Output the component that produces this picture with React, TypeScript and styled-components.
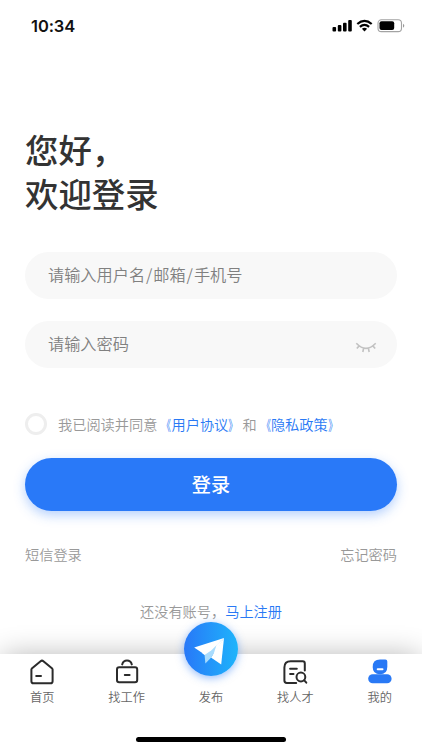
import React from 'react';
import styled, { createGlobalStyle } from 'styled-components';

const GlobalStyle = createGlobalStyle`
  * { box-sizing: border-box; }
  body { margin: 0; background: #fff; }
  button { font: inherit; border: 0; padding: 0; background: none; outline: none; }
`;

const Screen = styled.div`
  width: 100%;
  height: 750px;
  display: flex;
  flex-direction: column;
  overflow: hidden;
  background: #fff;
  font-family: 'Noto Sans CJK SC', sans-serif;
  font-weight: 350;
  color: #333;
`;

const StatusBar = styled.header`
  height: 50px;
  flex: none;
  display: flex;
  justify-content: space-between;
  align-items: center;
  padding: 2px 17px 0 31px;
`;

const Clock = styled.time`
  font: 600 16.5px/20px Inter, sans-serif;
  letter-spacing: -0.1px;
  color: #111;
`;

const Main = styled.main`
  flex: 1;
  display: flex;
  flex-direction: column;
  padding: 77px 25px 0;
`;

const Title = styled.h1`
  display: flex;
  flex-direction: column;
  margin: 0 0 38px;
  font-size: 33.4px;
  line-height: 43.5px;
  font-weight: 500;
  height: 87px;
`;

const Field = styled.div`
  display: flex;
  align-items: center;
  justify-content: space-between;
  height: 47px;
  margin-bottom: 22px;
  padding: 0 20px 0 23px;
  border-radius: 24px;
  background: #f8f8f8;
`;

const Placeholder = styled.span`
  padding-bottom: 3px;
  font-size: 16.2px;
  line-height: 24px;
  white-space: nowrap;
  color: #808080;
`;

const Slash = styled.span`
  display: inline-block;
  width: 8.2px;
  text-align: center;
`;

const Agreement = styled.div`
  display: flex;
  align-items: center;
  height: 24px;
  margin: 22px 0 21.5px;
  font-size: 14.2px;
  line-height: 20px;
  white-space: nowrap;
  color: #999;
  > span { padding-bottom: 1px; }
`;

const Radio = styled.span`
  width: 22px;
  height: 22px;
  margin-right: 11px;
  border: 3px solid #eee;
  border-radius: 50%;
`;

const Link = styled.span`
  color: #2979f5;
`;

const Bracket = styled.span<{ $side: 'left' | 'right' }>`
  display: inline-block;
  transform: scaleX(0.65);
  transform-origin: ${(p) => (p.$side === 'left' ? '95%' : '5%')} center;
`;

const Submit = styled.button`
  flex: none;
  height: 53px;
  border-radius: 27px;
  background: #2979f8;
  color: #fff;
  font-size: 19.2px;
  font-weight: 500;
  box-shadow: 0 4px 12px rgba(41, 121, 248, 0.35);
`;

const LinkRow = styled.div<{ $center?: boolean }>`
  display: flex;
  justify-content: ${(p) => (p.$center ? 'center' : 'space-between')};
  margin-top: ${(p) => (p.$center ? 33 : 31.5)}px;
  font-size: 14.2px;
  line-height: 24px;
  color: #999;
`;

const TabBar = styled.nav`
  position: relative;
  flex: none;
  height: 96px;
  display: flex;
  flex-direction: column;
  justify-content: space-between;
  background: #fff;
  box-shadow: 0 0 28px -3px rgba(0, 0, 0, 0.33);
`;

const Tabs = styled.div`
  display: grid;
  grid-template-columns: repeat(5, 1fr);
`;

const Tab = styled.div`
  display: flex;
  flex-direction: column;
  align-items: center;
  padding-top: 5px;
  font-size: 12.2px;
  line-height: 18px;
  color: #666;
`;

const IconBox = styled.span`
  width: 26px;
  height: 26px;
  margin-bottom: 3px;
  svg { display: block; }
`;

const Publish = styled.button`
  position: absolute;
  left: 50%;
  top: -32px;
  width: 54px;
  height: 54px;
  margin-left: -27.5px;
  border-radius: 50%;
  background: linear-gradient(90deg, #2878f8, #1eb4fb);
  box-shadow: 0 2px 8px rgba(41, 121, 248, 0.5);
  svg { display: block; }
`;

const HomeIndicator = styled.div`
  width: 150px;
  height: 5px;
  margin: 0 auto 8.5px;
  border-radius: 3px;
  background: #000;
`;

const StatusIcons = () => (
  <svg width="73" height="16" viewBox="0 0 73 16">
    <g fill="#000">
      <rect x="0.5" y="9" width="3.6" height="4.5" rx="1" />
      <rect x="5.8" y="7" width="3.6" height="6.5" rx="1" />
      <rect x="11" y="4.7" width="3.6" height="8.8" rx="1" />
      <rect x="16.2" y="2" width="3.6" height="11.5" rx="1" />
      <path d="M32.5 13.4 L29.9 10.8 Q32.5 8.7 35.1 10.8Z" />
    </g>
    <g fill="none" stroke="#000" strokeWidth="2.2">
      <path d="M25.3 6 Q32.5 -.3 39.7 6" />
      <path d="M27.9 8.9 Q32.5 5 37.1 8.9" />
    </g>
    <rect x="46" y="1.8" width="23.5" height="11.8" rx="3.4" fill="none" stroke="#a3a3a3" strokeWidth="1.1" />
    <rect x="47.5" y="3.3" width="14.7" height="8.8" rx="2" fill="#000" />
    <path d="M71 5.7 Q73.6 7.7 71 9.7Z" fill="#999" />
  </svg>
);

const ClosedEye = () => (
  <svg width="22" height="12" viewBox="0 0 22 12" fill="none" stroke="#c2c2c2" strokeWidth="1.6" transform="translate(0 3)">
    <path d="M1.3 1.3 Q11 11.5 20.7 1.3 M4.2 3.9 L1.8 6.5 M8.7 6 L7.8 10 M13.3 6 L14.2 10 M17.8 3.9 L20.2 6.5" />
  </svg>
);

const HomeIcon = () => (
  <svg width="26" height="26" viewBox="0 0 26 26" fill="none" stroke="#2b2b2b" strokeWidth="2" strokeLinecap="round" strokeLinejoin="round">
    <path d="M2.4 10.6 Q2.4 10 2.8 9.6 L11.6 2.2 Q13 1.1 14.4 2.2 L23.2 9.6 Q23.6 10 23.6 10.6 V22.2 Q23.6 24.3 21.5 24.3 H4.5 Q2.4 24.3 2.4 22.2Z M7.2 17 H12" />
  </svg>
);

const BagIcon = () => (
  <svg width="26" height="26" viewBox="0 0 26 26" fill="none" stroke="#2b2b2b" strokeWidth="2" strokeLinecap="round">
    <rect x="3" y="8.2" width="20.2" height="15" rx="2.2" />
    <path d="M8.2 5.4 Q9.2 1.6 13 1.6 T17.8 5.4 M10.8 16.1 H15.6" />
  </svg>
);

const TalentIcon = () => (
  <svg width="26" height="26" viewBox="0 0 26 26" fill="none" stroke="#2b2b2b" strokeWidth="2" strokeLinecap="round">
    <path d="M14.2 24 H4.8 Q2.4 24 2.4 21.6 V8.6 Q2.4 2.3 8.7 2.3 H20.7 Q22.8 2.3 22.8 4.4 V11.5 M8.1 9.7 H14.8 M8.1 15.1 H11.5" />
    <circle cx="18.9" cy="18" r="4.4" />
    <path d="M22.3 21.4 L24.3 23.7" />
  </svg>
);

const ProfileIcon = () => (
  <svg width="26" height="26" viewBox="0 0 26 26">
    <path d="M13 .6 H18.4 Q20.3 .6 20.3 2.5 V8 Q20.3 15.3 13 15.3 Q5.7 15.3 5.7 8 Q5.7 .6 13 .6Z" fill="#2979f5" />
    <rect x="1.2" y="15.2" width="23.4" height="9" rx="4.5" fill="#2979f5" />
    <path d="M10.7 10.2 H15.5" stroke="#fff" strokeWidth="2" strokeLinecap="round" />
  </svg>
);

const PaperPlane = () => (
  <svg width="54" height="54" viewBox="0 0 54 54">
    <path d="M10.2 25.6 L40 16 L20.5 32.6 Z" fill="#fff" />
    <path d="M27 35.4 L40 16 L37.2 42.6 Z" fill="#fff" />
    <path d="M20.5 32.2 L40 16 L27.2 35.4 L21.4 41.6Z" fill="#a9dcfd" />
    <path d="M18 31 L40 16 L27.2 28.5 L20.5 33Z" fill="#fff" />
    <path d="M32.5 23 L40 16 L28 37Z" fill="#fff" />
  </svg>
);

const TABS = [
  { label: '首页', icon: <HomeIcon /> },
  { label: '找工作', icon: <BagIcon /> },
  { label: '发布', icon: null },
  { label: '找人才', icon: <TalentIcon /> },
  { label: '我的', icon: <ProfileIcon /> },
];

const DocumentLink = ({ name }: { name: string }) => (
  <Link>
    <Bracket $side="left">《</Bracket>
    {name}
    <Bracket $side="right">》</Bracket>
  </Link>
);

export default function App() {
  return (
    <Screen>
      <GlobalStyle />
      <StatusBar>
        <Clock>10:34</Clock>
        <StatusIcons />
      </StatusBar>
      <Main>
        <Title>
          <span>您好，</span>
          <span>欢迎登录</span>
        </Title>
        <Field>
          <Placeholder>
            请输入用户名<Slash>/</Slash>邮箱<Slash>/</Slash>手机号
          </Placeholder>
        </Field>
        <Field>
          <Placeholder>请输入密码</Placeholder>
          <ClosedEye />
        </Field>
        <Agreement>
          <Radio />
          <span>我已阅读并同意</span>
          <DocumentLink name="用户协议" />
          <span>和</span>
          <DocumentLink name="隐私政策" />
        </Agreement>
        <Submit>登录</Submit>
        <LinkRow>
          <span>短信登录</span>
          <span>忘记密码</span>
        </LinkRow>
        <LinkRow $center>
          <span>还没有账号，</span>
          <Link>马上注册</Link>
        </LinkRow>
      </Main>
      <TabBar>
        <Tabs>
          {TABS.map((tab) => (
            <Tab key={tab.label}>
              <IconBox>{tab.icon}</IconBox>
              {tab.label}
            </Tab>
          ))}
        </Tabs>
        <HomeIndicator />
        <Publish aria-label="发布">
          <PaperPlane />
        </Publish>
      </TabBar>
    </Screen>
  );
}
